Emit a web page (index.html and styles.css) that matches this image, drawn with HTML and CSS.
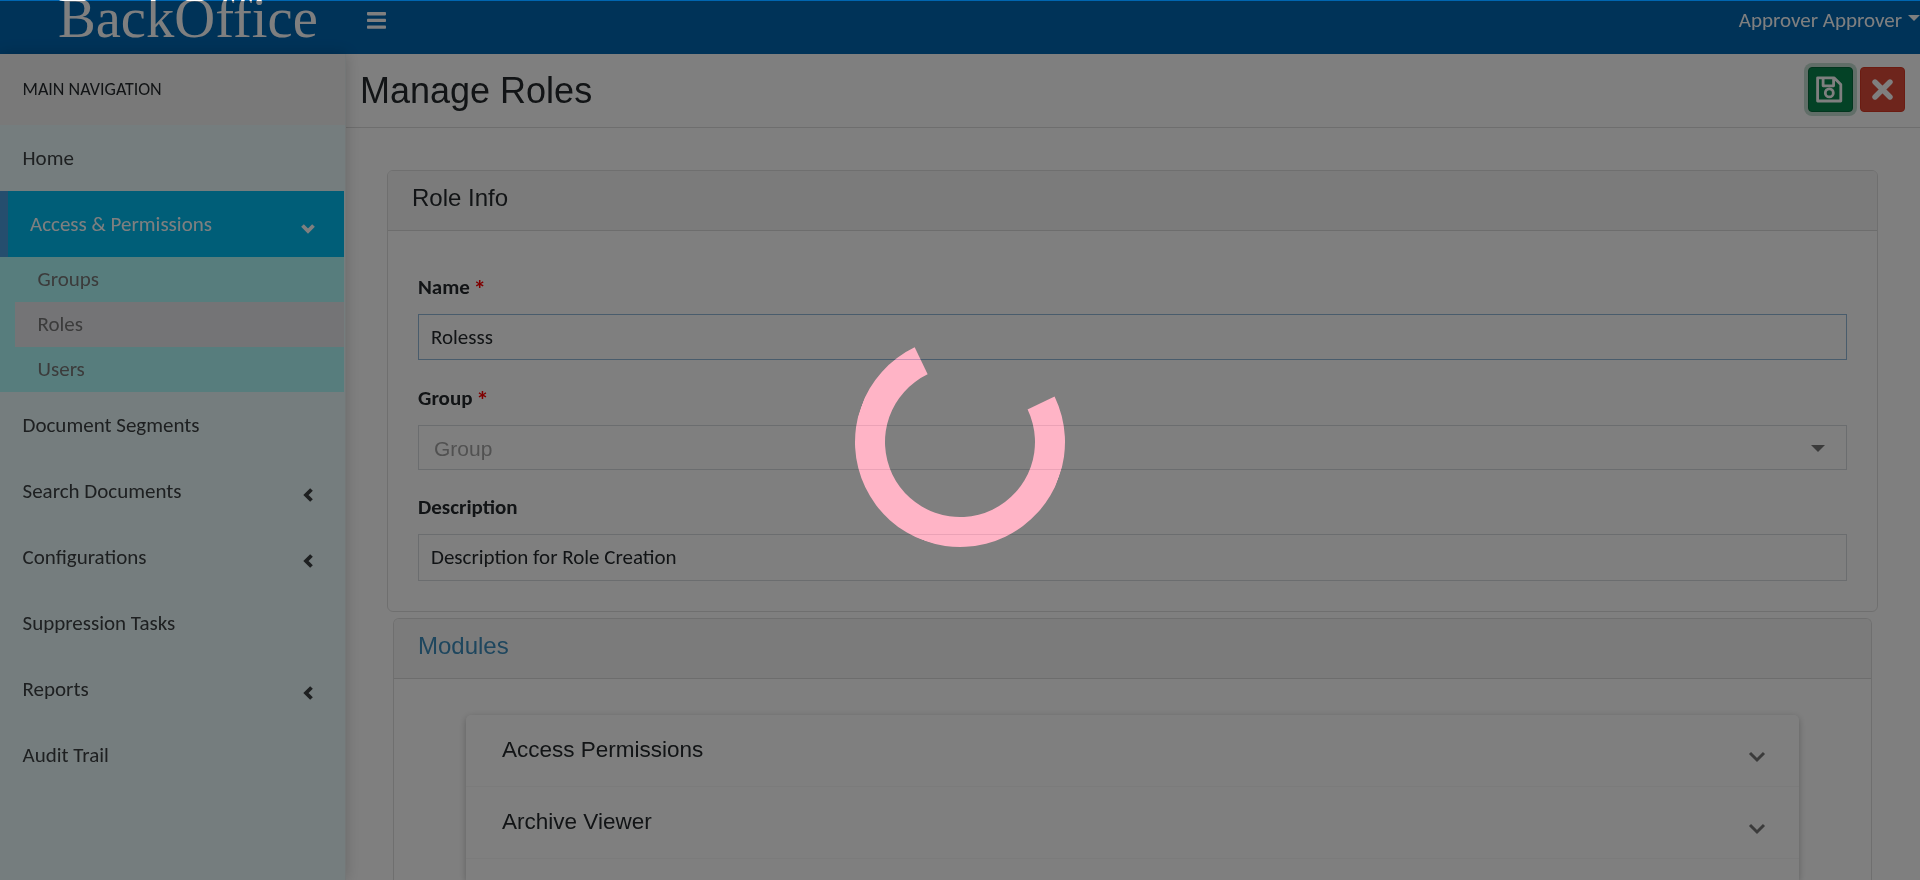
FILE: index.html
```html
<!DOCTYPE html>
<html lang="en">
<head>
<meta charset="utf-8">
<title>BackOffice - Manage Roles</title>
<link rel="stylesheet" href="styles.css">
</head>
<body>
<header class="topbar">
  <div class="logo">BackOffice</div>
  <svg class="menu-icon" width="19" height="17" viewBox="0 0 19 17" fill="#fff"><rect width="19" height="3.4" rx=".8"/><rect y="6.7" width="19" height="3.4" rx=".8"/><rect y="13.4" width="19" height="3.4" rx=".8"/></svg>
  <div class="user"><span class="user-name">Approver Approver</span><i class="caret"></i></div>
</header>
<div class="layout">
  <nav class="sidebar">
    <div class="nav-title"><span>MAIN NAVIGATION</span></div>
    <a class="item"><span>Home</span></a>
    <a class="item active"><span>Access &amp; Permissions</span><svg class="arrow" width="14" height="14" viewBox="0 0 14 14"><path d="M1.5 4.5 7 10 12.5 4.5"/></svg></a>
    <div class="submenu">
      <a class="sub">Groups</a>
      <a class="sub current">Roles</a>
      <a class="sub">Users</a>
    </div>
    <a class="item"><span>Document Segments</span></a>
    <a class="item"><span>Search Documents</span><svg class="arrow" width="14" height="14" viewBox="0 0 14 14"><path d="M10.5 1.5 5 7 10.5 12.5"/></svg></a>
    <a class="item"><span>Configurations</span><svg class="arrow" width="14" height="14" viewBox="0 0 14 14"><path d="M10.5 1.5 5 7 10.5 12.5"/></svg></a>
    <a class="item"><span>Suppression Tasks</span></a>
    <a class="item"><span>Reports</span><svg class="arrow" width="14" height="14" viewBox="0 0 14 14"><path d="M10.5 1.5 5 7 10.5 12.5"/></svg></a>
    <a class="item"><span>Audit Trail</span></a>
  </nav>
  <main class="content">
    <div class="page-head">
      <h1>Manage Roles</h1>
      <button class="btn save"><svg width="27" height="27" viewBox="0 0 27 27" fill="none" stroke="#fff" stroke-width="2.8" stroke-linejoin="round"><path d="M1.6 1.8H18L24.8 8.6V25H1.6Z"/><path d="M7.1 1.8V9.8H17.6V1.8"/><circle cx="13.3" cy="16.9" r="4"/></svg></button>
      <button class="btn close"><svg width="21" height="21" viewBox="0 0 21 21" stroke="#fff" stroke-width="5.4" stroke-linecap="round"><path d="M3 3 18 18M18 3 3 18"/></svg></button>
    </div>
    <section class="card">
      <h2 class="card-head">Role Info</h2>
      <div class="form">
        <label class="label">Name <b class="req">*</b></label>
        <div class="input focus">Rolesss</div>
        <label class="label">Group <b class="req">*</b></label>
        <div class="input select"><span>Group</span><i class="caret"></i></div>
        <label class="label">Description</label>
        <div class="input desc">Description for Role Creation</div>
      </div>
    </section>
    <section class="card modules">
      <h2 class="card-head">Modules</h2>
      <div class="accordion">
        <div class="panel"><span>Access Permissions</span><svg width="18" height="12" viewBox="0 0 18 12"><path d="M2 2 9 9 16 2"/></svg></div>
        <div class="panel"><span>Archive Viewer</span><svg width="18" height="12" viewBox="0 0 18 12"><path d="M2 2 9 9 16 2"/></svg></div>
        <div class="panel last"></div>
      </div>
    </section>
  </main>
</div>
<div class="overlay"></div>
<div class="spinner"></div>
</body>
</html>
```
FILE: styles.css
```css
* { box-sizing: border-box; }
body { margin: 0; width: 1920px; height: 880px; overflow: hidden; background: #fff; color: #24292c; font: 21px/24px Carlito, Lato, sans-serif; }
h1, h2 { margin: 0; font-family: "Liberation Sans", Arial, sans-serif; font-weight: 400; }

.topbar { height: 54px; background: #0066b1; color: #fff; display: flex; align-items: flex-start; }
.logo { width: 367px; padding-left: 58px; margin-top: -14px; font: 56.6px/64px "Liberation Serif", "Times New Roman", serif; }
.menu-icon { margin-top: 12px; }
.user { margin-left: auto; display: flex; gap: 6px; padding-top: 8px; }
.caret { width: 0; height: 0; border: 6px solid transparent; border-top-color: currentColor; border-bottom: 0; }
.user .caret { margin-top: 7px; }

.layout { display: flex; height: 826px; }
.sidebar { width: 346px; flex: none; background: #ebfbfc; border-right: 1px solid #e9eeee; box-shadow: 0 0 14px rgba(0, 0, 0, .2); position: relative; padding-right: 1px; }
.nav-title { height: 71px; background: #f3f3f3; padding: 23px 0 0 22.5px; font-size: 18px; margin-right: -1px; }
.item { display: flex; align-items: center; justify-content: space-between; height: 66px; padding: 0 29px 0 22.5px; color: #3c4043; }
.item span { padding-bottom: 1px; }
.arrow { fill: none; stroke: currentColor; stroke-width: 3.8; margin-top: 7px; }
.active { background: #00bcf0; border-left: 8px solid #4a9cdc; color: #fff; padding-left: 22px; }
.submenu { background: #affafa; padding-left: 15px; color: #777; }
.sub { display: block; height: 45px; padding: 10px 0 0 22.5px; }
.current { background: #e8e8ec; }

.content { flex: 1; min-width: 0; }
.page-head { height: 74px; border-bottom: 1px solid #dcdcdc; display: flex; align-items: center; padding: 0 15px 0 14px; }
h1 { font-size: 36px; line-height: 44px; flex: 1; }
.btn { width: 45px; height: 45px; border-radius: 4px; padding: 0; display: grid; place-items: center; margin-left: 7px; margin-bottom: 3px; }
.save { background: #08854c; border: 1px solid #066b3c; box-shadow: 0 0 0 4px #c3ddd0; padding-right: 2px; }
.close { background: #dd4b39; border: 1px solid #d73925; padding-right: 1px; }

.card { margin: 42px 42px 0 41px; height: 442px; border: 1px solid #dfdfdf; border-radius: 6px; overflow: hidden; }
.card-head { height: 60px; background: #f6f6f6; border-bottom: 1px solid #dbdbdb; padding: 12px 24px; font-size: 24px; line-height: 30px; }
.form { padding: 43px 30px 0; }
.label { display: block; height: 40px; padding-top: 1px; font-weight: 700; }
.req { color: #f00; font-size: 25px; line-height: 20px; vertical-align: -3px; margin-left: -1px; }
.input { height: 46px; border: 1px solid #d7dbdf; padding: 10px 12px; margin-bottom: 25px; }
.focus { border-color: #93b9d9; }
.select { height: 45px; display: flex; justify-content: space-between; align-items: center; padding: 2px 21px 0 15px; margin-bottom: 24px; font-family: "Liberation Sans", Arial, sans-serif; font-size: 21px; color: #a3a3a3; }
.select .caret { border-width: 7px 7px 0; color: #777; }
.desc { height: 47px; }
.modules { margin: 6px 48px 0 47px; height: 262px; border-bottom: 0; border-radius: 6px 6px 0 0; }
.modules .card-head { color: #3c8dbc; }
.accordion { margin: 36px 72px 0; border-radius: 5px 5px 0 0; box-shadow: 0 2px 7px rgba(0, 0, 0, .26); }
.panel { height: 72px; display: flex; align-items: center; justify-content: space-between; padding: 0 33px 0 36px; border-bottom: 1px solid #f6f6f6; font-family: "Liberation Sans", Arial, sans-serif; font-size: 22.5px; }
.panel span { padding-bottom: 1px; }
.panel svg { fill: none; stroke: #777; stroke-width: 3; margin-top: 12px; }
.last { height: 21px; border-bottom: 0; }

.overlay { position: absolute; inset: 1px 0 0; background: rgba(0, 0, 0, .5); }
.spinner { position: absolute; left: 855px; top: 337px; width: 210px; height: 210px; border: 30px solid rgb(128, 53, 71); border-top-color: transparent; border-radius: 50%; transform: rotate(19.4deg); mix-blend-mode: plus-lighter; }
```
